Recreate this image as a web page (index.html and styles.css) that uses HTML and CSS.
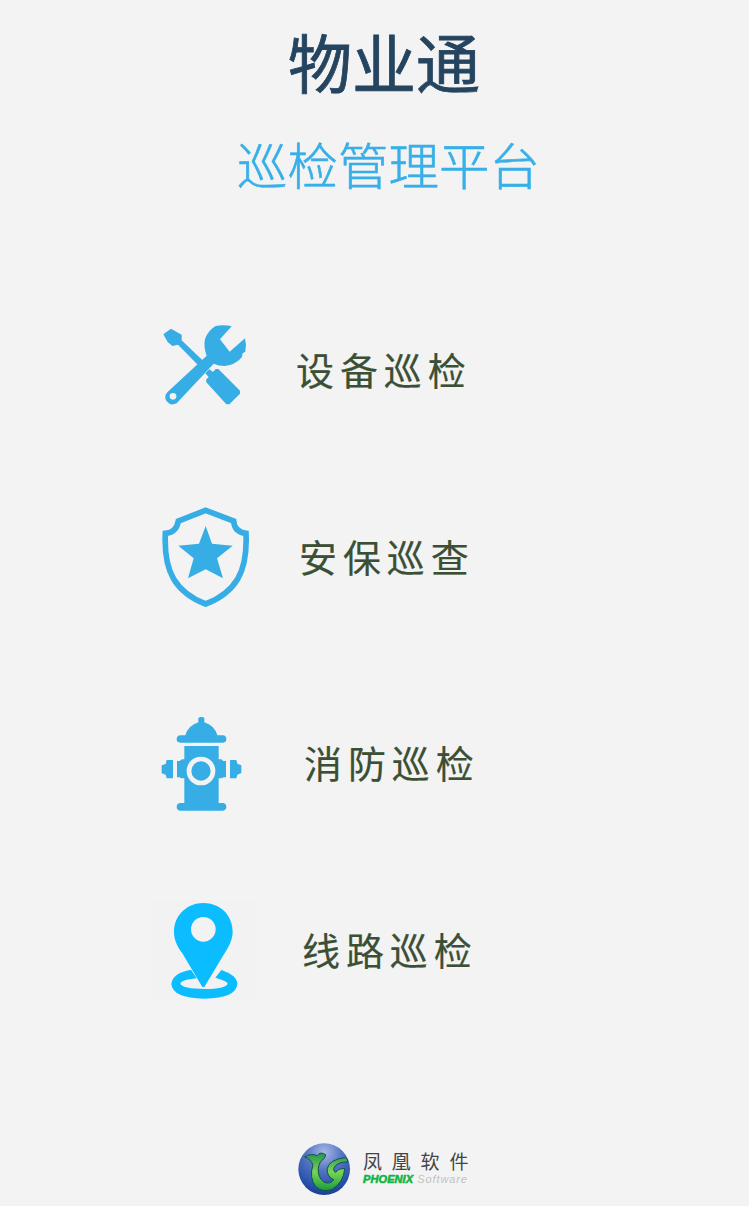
FILE: index.html
```html
<!DOCTYPE html>
<html lang="zh-CN">
<head>
<meta charset="utf-8">
<title>物业通</title>
<link rel="stylesheet" href="styles.css">
</head>
<body>
<main class="page">
  <header class="header">
    <h1 class="title">物业通</h1>
    <p class="subtitle">巡检管理平台</p>
  </header>
  <nav class="menu">
    <a class="item item-device">
      <svg class="icon" viewBox="0 0 330 330">
        <path d="M63 56L95 74V91L163 156L149 170L84 104L67 108L53 96L40 73Z"/>
        <path d="M205 177L270 242V251L238 283H229L169 217L168 209L176 201L166 190L178 178L189 186L197 177Z"/>
        <path d="M197 48Q222 43 245 49L210 88L239 125L285 85Q290 103 286 125L278 130L276 141Q259 161 236 166Q215 171 191 161L80 280Q73 284 62 283Q48 276 46 265Q45 253 52 247L170 137Q160 111 165 87Q175 60 197 48Z"/>
        <circle class="hole" cx="69" cy="259" r="10"/>
      </svg>
      <span class="label">设备巡检</span>
    </a>
    <a class="item item-security">
      <svg class="icon" viewBox="0 0 330 375">
        <path class="outline" d="M167 46L251 78Q253 111 288 115Q292 204 263 252Q233 302 167 327Q101 302 71 252Q42 204 46 115Q79 113 85 78Z"/>
        <path d="M167 93L186 146L248 152L201 190L219 250L167 223L114 250L131 190L85 152L147 146Z"/>
      </svg>
      <span class="label">安保巡查</span>
    </a>
    <a class="item item-fire">
      <svg class="icon" viewBox="0 0 330 345">
        <path d="M145 40Q146 36 154 36Q162 36 163 40V52Q193 61 202 91H219Q229 92 229 103Q229 113 219 113H91Q80 113 80 103Q80 92 91 91H106Q114 62 145 52Z"/>
        <path d="M103 123H206V163H214L220 168H228V217H221L214 220H206V294H220Q229 296 229 306Q228 316 219 317H90Q80 315 80 306Q80 296 90 294H103V220H95L88 217H81V168H89L96 163H103Z"/>
        <path d="M50 165H69V220H50L47 209L35 205V181L47 177Z"/>
        <path d="M240 165H259L262 176L274 181V204L262 209L259 220H240Z"/>
        <circle class="ring" cx="153" cy="198" r="36"/>
      </svg>
      <span class="label">消防巡检</span>
    </a>
    <a class="item item-route">
      <svg class="icon icon-bright" viewBox="0 0 360 360">
        <path class="tile" d="M24 30H330V337H24Z"/>
        <path fill-rule="evenodd" d="M175 39C225 39 263 75 263 125C263 151 249 174 236 194L178 291H172L112 190C96 168 87 149 87 125C87 76 126 39 175 39ZM175 81A37 37 0 1 0 175 155A37 37 0 1 0 175 81Z"/>
        <path d="M138 239L155 265Q106 270 106 282Q114 296 178 297Q241 297 248 281Q248 273 211 263L229 240Q276 256 277 281Q275 324 178 326Q82 324 79 282Q82 249 138 239Z"/>
      </svg>
      <span class="label">线路巡检</span>
    </a>
  </nav>
  <footer class="footer">
    <svg class="logo" viewBox="0 0 160 160">
      <defs>
        <radialGradient id="globe" cx=".5" cy=".18" r=".85">
          <stop offset="0" stop-color="#a9b9e6"/>
          <stop offset=".4" stop-color="#5575c2"/>
          <stop offset=".8" stop-color="#2550a9"/>
          <stop offset="1" stop-color="#193b8b"/>
        </radialGradient>
        <linearGradient id="leaf" x1="0" y1="0" x2="0" y2="1">
          <stop offset="0" stop-color="#27944e"/>
          <stop offset=".5" stop-color="#77d653"/>
          <stop offset="1" stop-color="#189a3f"/>
        </linearGradient>
      </defs>
      <circle cx="79" cy="79" r="78" fill="url(#globe)"/>
      <path class="leaf" d="M20 42Q40 30 58 38Q68 24 84 36L79 47Q64 55 61 77Q59 105 80 119Q97 125 108 111Q87 102 88 78Q94 50 142 44Q150 50 151 57Q118 56 108 76Q107 87 114 89Q122 76 141 77Q138 119 103 140Q75 151 53 131Q33 105 45 66Q39 48 20 42Z"/>
    </svg>
    <div class="brand">
      <div class="brand-cn">凤凰软件</div>
      <div class="brand-en"><b class="brand-name">PHOENIX</b><i class="brand-kind">Software</i></div>
    </div>
  </footer>
</main>
</body>
</html>
```
FILE: styles.css
```css
* { box-sizing: border-box; }
body {
  margin: 0;
  background: #f3f3f3;
  font-family: "Noto Sans CJK SC", sans-serif;
}
.page {
  display: flex;
  flex-direction: column;
  width: 749px;
  height: 1206px;
  overflow: hidden;
}
.header {
  height: 310px;
  padding-top: 20px;
  text-align: center;
}
.title {
  margin: 0;
  padding-left: 19px;
  font-size: 64px;
  font-weight: 400;
  line-height: 80px;
  color: #25445f;
  -webkit-text-stroke: .8px #25445f;
}
.subtitle {
  margin: 23px 0 0;
  padding-left: 28px;
  font-size: 50.5px;
  font-weight: 300;
  line-height: 80px;
  color: #37afe8;
  -webkit-text-stroke: .6px #37afe8;
}
.menu {
  display: flex;
  flex-direction: column;
  align-items: flex-start;
  padding-left: 150px;
}
.item {
  display: flex;
  align-items: center;
}
.icon {
  display: block;
  width: 110px;
  fill: #37ade5;
}
.item-device .icon { height: 110px; }
.item-security { margin-top: 75px; }
.item-security .icon { height: 125px; }
.item-fire { margin-top: 85px; }
.item-fire .icon { height: 115px; }
.item-route { margin: 70px 0 0 -5px; }
.item-route .icon { width: 120px; height: 120px; }
.icon-bright { fill: #0bbcff; }
.hole { fill: #f3f3f3; }
.tile { fill: #f2f2f2; }
.outline { fill: none; stroke: #37ade5; stroke-width: 17; }
.ring { fill: none; stroke: #f3f3f3; stroke-width: 14; }
.label {
  margin-left: 36px;
  font-size: 38px;
  letter-spacing: 5.9px;
  line-height: 50px;
  color: #3b4f35;
  -webkit-text-stroke: .2px #3b4f35;
}
.item-device .label { padding-top: 7px; }
.item-security .label { margin-left: 39px; padding-bottom: 4px; }
.item-fire .label { margin-left: 44px; padding-bottom: 2px; }
.item-route .label { margin-left: 37px; padding-bottom: 2px; }
.footer {
  display: flex;
  margin: 133px 0 0 298px;
}
.logo {
  width: 53px;
  height: 53px;
}
.leaf {
  fill: url(#leaf);
  stroke: #174d54;
  stroke-width: 3;
}
.brand {
  padding: 7px 0 0 12px;
}
.brand-cn {
  font-size: 19px;
  letter-spacing: 9.8px;
  line-height: 22px;
  color: #444;
}
.brand-en {
  display: flex;
  gap: 4px;
  padding-top: 1px;
  font: 11px/13px "Liberation Sans", sans-serif;
}
.brand-name {
  font-style: italic;
  font-weight: 700;
  letter-spacing: .1px;
  color: #12b443;
  -webkit-text-stroke: .6px #12b443;
}
.brand-kind {
  letter-spacing: .9px;
  color: #c2c2c2;
}
```
